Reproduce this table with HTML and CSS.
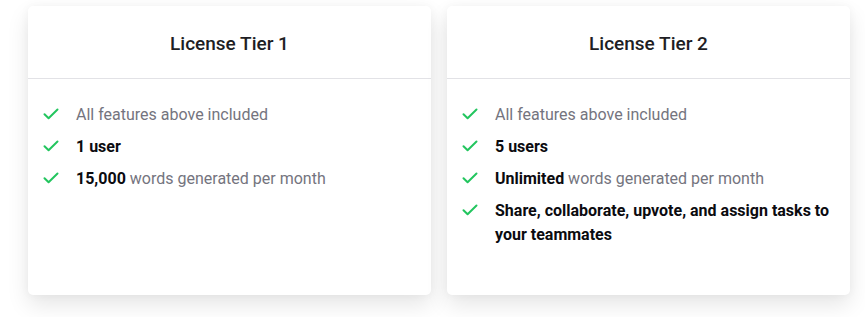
FILE: index.html
```html
<!DOCTYPE html>
<html>
<head>
<meta charset="utf-8">
<link rel="stylesheet" href="styles.css">
</head>
<body>
<div class="tiers">
  <div class="card">
    <div class="card-head">License Tier 1</div>
    <ul class="features">
      <li><svg class="check" viewBox="0 0 16 12"><path d="M1.5 6.2 L5.6 10.2 L14.5 1.5" /></svg><span class="muted">All features above included</span></li>
      <li><svg class="check" viewBox="0 0 16 12"><path d="M1.5 6.2 L5.6 10.2 L14.5 1.5" /></svg><span><b>1 user</b></span></li>
      <li><svg class="check" viewBox="0 0 16 12"><path d="M1.5 6.2 L5.6 10.2 L14.5 1.5" /></svg><span><b>15,000</b> <span class="muted">words generated per month</span></span></li>
    </ul>
  </div>
  <div class="card">
    <div class="card-head">License Tier 2</div>
    <ul class="features">
      <li><svg class="check" viewBox="0 0 16 12"><path d="M1.5 6.2 L5.6 10.2 L14.5 1.5" /></svg><span class="muted">All features above included</span></li>
      <li><svg class="check" viewBox="0 0 16 12"><path d="M1.5 6.2 L5.6 10.2 L14.5 1.5" /></svg><span><b>5 users</b></span></li>
      <li><svg class="check" viewBox="0 0 16 12"><path d="M1.5 6.2 L5.6 10.2 L14.5 1.5" /></svg><span><b>Unlimited</b> <span class="muted">words generated per month</span></span></li>
      <li><svg class="check" viewBox="0 0 16 12"><path d="M1.5 6.2 L5.6 10.2 L14.5 1.5" /></svg><span><b>Share, collaborate, upvote, and assign tasks to your teammates</b></span></li>
    </ul>
  </div>
</div>
</body>
</html>
```
FILE: styles.css
```css
html, body {
  margin: 0;
  padding: 0;
  background: #ffffff;
}
body {
  font-family: Roboto, "Liberation Sans", sans-serif;
  min-height: 317px;
}
.tiers {
  display: flex;
  gap: 16px;
  padding: 6px 14px 22px 28px;
}
.card {
  width: 403px;
  height: 289px;
  background: #fff;
  border-radius: 5px;
  box-shadow: 0 10px 22px rgba(0,0,0,0.10), 0 0 10px rgba(0,0,0,0.04);
}
.card-head {
  height: 73px;
  box-sizing: border-box;
  border-bottom: 1px solid #e2e2e6;
  display: flex;
  align-items: center;
  justify-content: center;
  font-size: 19px;
  font-weight: 500;
  color: #1e1e24;
  padding-top: 2px;
}
.features {
  list-style: none;
  margin: 0;
  padding: 24px 20px 0 15px;
  display: flex;
  flex-direction: column;
  gap: 8px;
}
.features li {
  display: flex;
  align-items: flex-start;
  font-size: 16px;
  line-height: 24px;
  color: #111;
}
.check {
  flex: none;
  width: 16px;
  height: 12px;
  margin-top: 5px;
  margin-right: 17px;
}
.check path {
  fill: none;
  stroke: #22c55e;
  stroke-width: 2;
  stroke-linecap: round;
  stroke-linejoin: round;
}
b {
  font-weight: 700;
  color: #0b0b0f;
}
.muted {
  color: #74747e;
}
```
